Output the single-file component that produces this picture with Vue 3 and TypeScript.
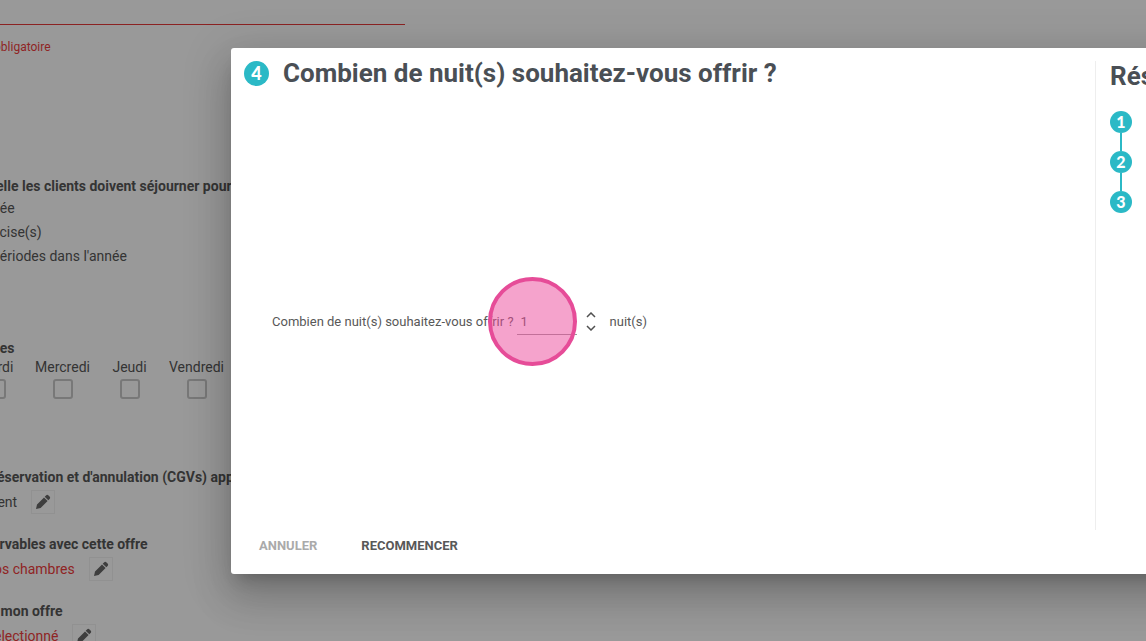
<script setup lang="ts">
import { ref } from 'vue'

const nights = ref(1)
const rule = ref('')
const days = ['Mardi', 'Mercredi', 'Jeudi', 'Vendredi']
const periods = ['née', 'écise(s)', 'périodes dans l\'année']
const choices = [
  { title: 'réservation et d\'annulation (CGVs) app', value: 'ient', missing: false },
  { title: 'ervables avec cette offre', value: 'os chambres', missing: true },
  { title: 'r mon offre', value: 'électionné', missing: true },
]
const steps = [1, 2, 3]

function change(delta: number) {
  nights.value = Math.max(1, nights.value + delta)
}
</script>

<template>
  <div class="page">
    <form class="form" @submit.prevent>
      <input v-model="rule" class="field" type="text" aria-label="Champ obligatoire" />
      <p class="error">obligatoire</p>

      <section class="periods">
        <h2>elle les clients doivent séjourner pour</h2>
        <ul>
          <li v-for="p in periods" :key="p">{{ p }}</li>
        </ul>
      </section>

      <section class="week">
        <h2>les</h2>
        <div class="days">
          <label v-for="d in days" :key="d" class="day">
            <span>{{ d }}</span>
            <input type="checkbox" />
          </label>
        </div>
      </section>

      <section v-for="c in choices" :key="c.title" class="choice">
        <h2>{{ c.title }}</h2>
        <div class="choice-row">
          <span :class="{ missing: c.missing }">{{ c.value }}</span>
          <button type="button" class="edit" aria-label="Modifier">
            <svg viewBox="0 0 16 16" width="16" height="16">
              <path d="M1 15l1-4.600L9 3.400l3.600 3.600-7 7zM9.700 2.700l1.300-1.300a1.800 1.800 0 0 1 2.500 0l1.100 1.100a1.800 1.800 0 0 1 0 2.500l-1.300 1.300z" />
            </svg>
          </button>
        </div>
      </section>
    </form>

    <div class="overlay">
      <div class="dialog" role="dialog" aria-modal="true" aria-labelledby="dialog-title">
        <div class="body">
          <main class="question">
            <header class="title">
              <span class="badge large">4</span>
              <h1 id="dialog-title">Combien de nuit(s) souhaitez-vous offrir ?</h1>
            </header>
            <div class="answer">
              <label for="nights">Combien de nuit(s) souhaitez-vous offrir ?</label>
              <span class="number">
                <input id="nights" v-model="nights" type="text" inputmode="numeric" />
                <span class="pointer"></span>
              </span>
              <span class="spinner">
                <button type="button" aria-label="Augmenter" @click="change(1)">
                  <svg viewBox="0 0 10 6" width="10" height="6"><path d="M1 5l4-4 4 4" /></svg>
                </button>
                <button type="button" aria-label="Diminuer" @click="change(-1)">
                  <svg viewBox="0 0 10 6" width="10" height="6"><path d="M1 1l4 4 4-4" /></svg>
                </button>
              </span>
              <span>nuit(s)</span>
            </div>
          </main>
          <aside class="summary">
            <h2>Rés</h2>
            <ol>
              <li v-for="s in steps" :key="s"><span class="badge">{{ s }}</span></li>
            </ol>
          </aside>
        </div>
        <footer class="actions">
          <button type="button" class="cancel">ANNULER</button>
          <button type="button">RECOMMENCER</button>
        </footer>
      </div>
    </div>
  </div>
</template>

<style>
body {
  margin: 0;
}
</style>

<style scoped>
.page {
  position: relative;
  height: 100vh;
  overflow: hidden;
  background: #fff;
  color: #585858;
  font-family: Roboto, "Liberation Sans", sans-serif;
  font-size: 14px;
}
.page * {
  box-sizing: border-box;
}
h1, h2, p, ul, ol {
  margin: 0;
  padding: 0;
  list-style: none;
}
button {
  padding: 0;
  border: 0;
  background: none;
  font: inherit;
  color: inherit;
  cursor: pointer;
}
.form {
  margin-left: -8px;
  white-space: nowrap;
}
.form h2 {
  font-size: 14px;
  line-height: 20px;
  font-weight: 700;
}
.field {
  display: block;
  width: 413px;
  height: 25px;
  padding: 0;
  border: 0;
  border-bottom: 1px solid #e83a3a;
  outline: 0;
  background: none;
}
.error {
  margin-top: 12px;
  padding-left: 2px;
  color: #f03c3c;
  font-size: 12px;
  line-height: 20px;
}
.periods {
  margin-top: 119px;
}
.periods h2, .week h2 {
  padding-left: 4px;
}
.periods li {
  line-height: 24px;
}
.week {
  margin: 70px 0 68px;
}
.days {
  display: grid;
  grid-template-columns: repeat(4, 67px);
  margin-left: -30px;
}
.day {
  display: flex;
  flex-direction: column;
  align-items: center;
  gap: 2px;
  line-height: 19px;
}
.day input {
  appearance: none;
  width: 20px;
  height: 20px;
  margin: 0;
  border: 2px solid #c8c8c8;
  border-radius: 3px;
}
.choice {
  margin-bottom: 20px;
}
.choice-row {
  display: flex;
  align-items: center;
  gap: 14px;
  height: 24px;
  margin-top: 3px;
  padding-left: 2px;
}
.missing {
  color: #f03c3c;
}
.edit {
  display: grid;
  place-items: center;
  width: 24px;
  height: 24px;
  border: 1px solid #f2f2f2;
}
.edit svg {
  fill: #686868;
}
.overlay {
  position: absolute;
  inset: 0;
  display: flex;
  padding: 48px 0 67px 231px;
  background: rgba(0, 0, 0, 0.4);
}
.dialog {
  display: flex;
  flex: 1;
  flex-direction: column;
  margin-right: -200px;
  border-radius: 3px;
  background: #fff;
  box-shadow: 0 11px 15px -7px rgba(0, 0, 0, 0.2), 0 24px 38px 3px rgba(0, 0, 0, 0.14), 0 9px 46px 8px rgba(0, 0, 0, 0.12);
}
.body {
  display: flex;
  flex: 1;
  padding-top: 13px;
}
.question {
  display: flex;
  flex: 1;
  flex-direction: column;
  padding-left: 13px;
}
.title {
  display: flex;
  align-items: center;
  gap: 14px;
  height: 24px;
}
h1, .summary h2 {
  color: #4a4f55;
  font-size: 26px;
  line-height: 30px;
  font-weight: 700;
}
.badge {
  display: grid;
  place-items: center;
  width: 22px;
  height: 22px;
  border-radius: 50%;
  background: #2bb9c6;
  color: #fff;
  font-family: Lato, Roboto, sans-serif;
  font-size: 16px;
  line-height: 20px;
  font-weight: 900;
}
.large {
  width: 25px;
  height: 25px;
  font-size: 18px;
}
.answer {
  display: flex;
  flex: 1;
  align-items: center;
  padding: 28px 0 0 28px;
  font-size: 13px;
}
.number {
  position: relative;
  margin: 0 9px 0 3px;
}
.number input {
  display: block;
  width: 60px;
  height: 26px;
  padding: 0 4px;
  border: 0;
  border-bottom: 1px solid #999;
  outline: 0;
  background: none;
  color: inherit;
  font: inherit;
}
.pointer {
  position: absolute;
  top: -32px;
  left: -29px;
  width: 89px;
  height: 89px;
  border: 4px solid #e64c98;
  border-radius: 50%;
  background: rgba(236, 72, 153, 0.5);
  pointer-events: none;
}
.spinner {
  display: grid;
  gap: 7px;
  margin-right: 14px;
}
.spinner button, .spinner svg {
  display: block;
}
.spinner path {
  fill: none;
  stroke: #505050;
  stroke-width: 1.500;
}
.summary {
  width: 251px;
  padding-left: 14px;
  border-left: 1px solid #eee;
}
.summary ol {
  margin-top: 20px;
}
.summary li {
  width: 22px;
}
.summary li + li::before {
  content: "";
  display: block;
  width: 2px;
  height: 18px;
  margin: 0 auto;
  background: #2bb9c6;
}
.actions {
  display: flex;
  gap: 44px;
  height: 44px;
  padding: 6px 28px 18px;
  font-size: 13px;
  line-height: 20px;
  font-weight: 700;
}
.cancel {
  color: #aaa;
}
</style>
